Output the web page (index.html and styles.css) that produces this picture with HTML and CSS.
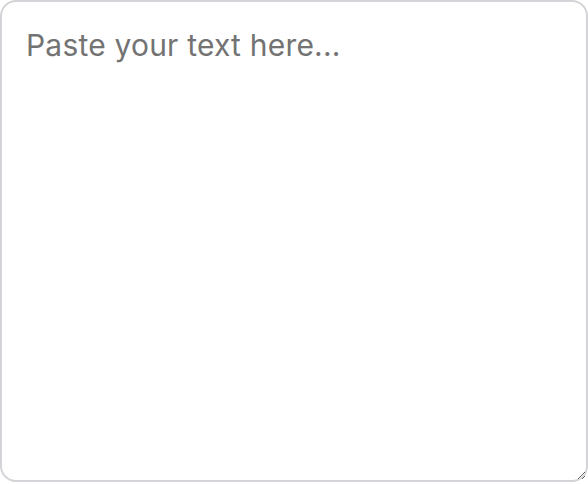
FILE: index.html
```html
<!DOCTYPE html>
<html lang="en">
<head>
    <meta charset="UTF-8">
    <meta name="viewport" content="width=device-width, initial-scale=1.0">
    <title>Paste Text</title>
    <link rel="stylesheet" href="styles.css">
</head>
<body>
    <div class="container">
        <textarea class="text-input" placeholder="Paste your text here..."></textarea>
    </div>
</body>
</html>
```

FILE: styles.css
```css
* {
    margin: 0;
    padding: 0;
    box-sizing: border-box;
}
body {
    background: #ffffff;
    font-family: Inter, 'Liberation Sans', sans-serif;
}
.container {
    width: 588px;
    height: 482px;
}
.text-input {
    display: block;
    width: 100%;
    height: 100%;
    padding: 21px 24px;
    border: 2px solid #d4d4d8;
    border-radius: 16px;
    font-family: Inter, 'Liberation Sans', sans-serif;
    font-size: 30px;
    letter-spacing: 0.2px;
    line-height: 1.5;
    color: #333;
    background: #fff;
    outline: none;
}
.text-input::placeholder {
    color: #737373;
}
```
